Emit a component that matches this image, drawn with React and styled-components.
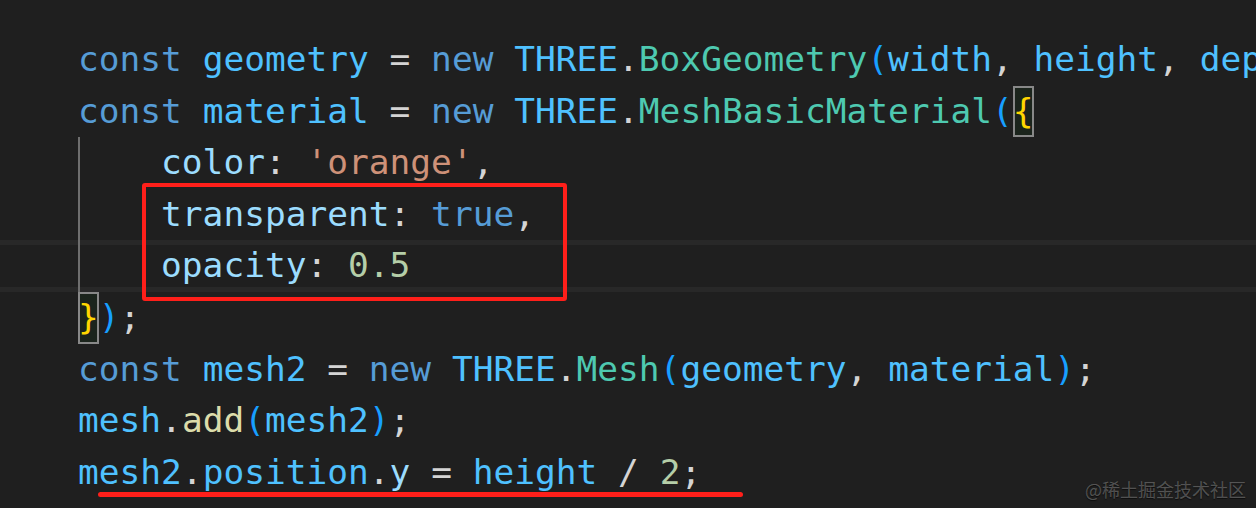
import React from "react";
import styled, { createGlobalStyle, css } from "styled-components";

const Global = createGlobalStyle`
  html, body { margin: 0; padding: 0; background: #1f1f1f; overflow: hidden; }
`;

const COLORS = {
  kw: "#569cd6",
  v: "#4fc1ff",
  p: "#9cdcfe",
  cls: "#4ec9b0",
  fn: "#dcdcaa",
  str: "#ce9178",
  num: "#b5cea8",
  op: "#d4d4d4",
  b1: "#ffd700",
  b3: "#179fff",
};

const LH = "51.6px";

const Editor = styled.div`
  position: relative;
  box-sizing: border-box;
  width: 1256px;
  height: 508px;
  padding-top: 34px;
  overflow: hidden;
  font-family: "DejaVu Sans Mono", "Liberation Mono", monospace;
  font-size: 34.5px;
  color: #d4d4d4;
`;

const Line = styled.div`
  height: ${LH};
  line-height: ${LH};
  padding-left: 78px;
  white-space: pre;
  ${(p) =>
    p.$current &&
    css`
      box-shadow: inset 0 5px 0 #282828, inset 0 -5px 0 #282828;
    `}
`;

const Tok = styled.span`
  color: ${(p) => COLORS[p.$t]};
`;

const Guide = styled.span`
  display: inline-block;
  box-sizing: border-box;
  width: 4ch;
  height: ${LH};
  vertical-align: top;
  border-left: 2px solid #6e6e6e;
`;

const Match = styled.span`
  display: inline-block;
  height: ${LH};
  vertical-align: top;
  background: #1b241c;
  box-shadow: inset 0 0 0 2px #888888;
  color: #ffd700;
`;

const RedBox = styled.div`
  position: absolute;
  left: 142px;
  top: 183px;
  width: 425px;
  height: 118px;
  box-sizing: border-box;
  border: 4.5px solid #ff1f1a;
  border-radius: 3px;
  pointer-events: none;
`;

const Underline = styled.div`
  position: absolute;
  left: 98px;
  top: 492px;
  width: 645px;
  height: 5px;
  border-radius: 3px;
  background: #ff1f1a;
`;

const Watermark = styled.div`
  position: absolute;
  right: 10px;
  bottom: 8px;
  font-family: "Noto Sans CJK SC", "Noto Sans", sans-serif;
  font-size: 18px;
  line-height: 22px;
  color: rgba(255, 255, 255, 0.27);
  text-shadow: 0 1px 1px rgba(0, 0, 0, 0.6);
`;

const lines = [
  {
    toks: [
      ["kw", "const "], ["v", "geometry"], ["op", " = "], ["kw", "new "],
      ["v", "THREE"], ["op", "."], ["cls", "BoxGeometry"], ["b3", "("],
      ["v", "width"], ["op", ", "], ["v", "height"], ["op", ", "], ["v", "depth"], ["b3", ")"], ["op", ";"],
    ],
  },
  {
    toks: [
      ["kw", "const "], ["v", "material"], ["op", " = "], ["kw", "new "],
      ["v", "THREE"], ["op", "."], ["cls", "MeshBasicMaterial"], ["b3", "("], ["match", "{"],
    ],
  },
  { guide: true, toks: [["p", "color"], ["op", ": "], ["str", "'orange'"], ["op", ","]] },
  { guide: true, toks: [["p", "transparent"], ["op", ": "], ["kw", "true"], ["op", ","]] },
  { guide: true, current: true, toks: [["p", "opacity"], ["op", ": "], ["num", "0.5"]] },
  { toks: [["match", "}"], ["b3", ")"], ["op", ";"]] },
  {
    toks: [
      ["kw", "const "], ["v", "mesh2"], ["op", " = "], ["kw", "new "], ["v", "THREE"], ["op", "."],
      ["cls", "Mesh"], ["b3", "("], ["v", "geometry"], ["op", ", "], ["v", "material"], ["b3", ")"], ["op", ";"],
    ],
  },
  {
    toks: [["v", "mesh"], ["op", "."], ["fn", "add"], ["b3", "("], ["v", "mesh2"], ["b3", ")"], ["op", ";"]],
  },
  {
    toks: [
      ["v", "mesh2"], ["op", "."], ["v", "position"], ["op", "."], ["p", "y"], ["op", " = "],
      ["v", "height"], ["op", " / "], ["num", "2"], ["op", ";"],
    ],
  },
];

export default function App() {
  return (
    <>
      <Global />
      <Editor>
        {lines.map((l, i) => (
          <Line key={i} $current={l.current}>
            {l.guide && <Guide />}
            {l.toks.map(([t, s], j) =>
              t === "match" ? <Match key={j}>{s}</Match> : <Tok key={j} $t={t}>{s}</Tok>
            )}
          </Line>
        ))}
        <RedBox />
        <Underline />
        <Watermark>@稀土掘金技术社区</Watermark>
      </Editor>
    </>
  );
}
